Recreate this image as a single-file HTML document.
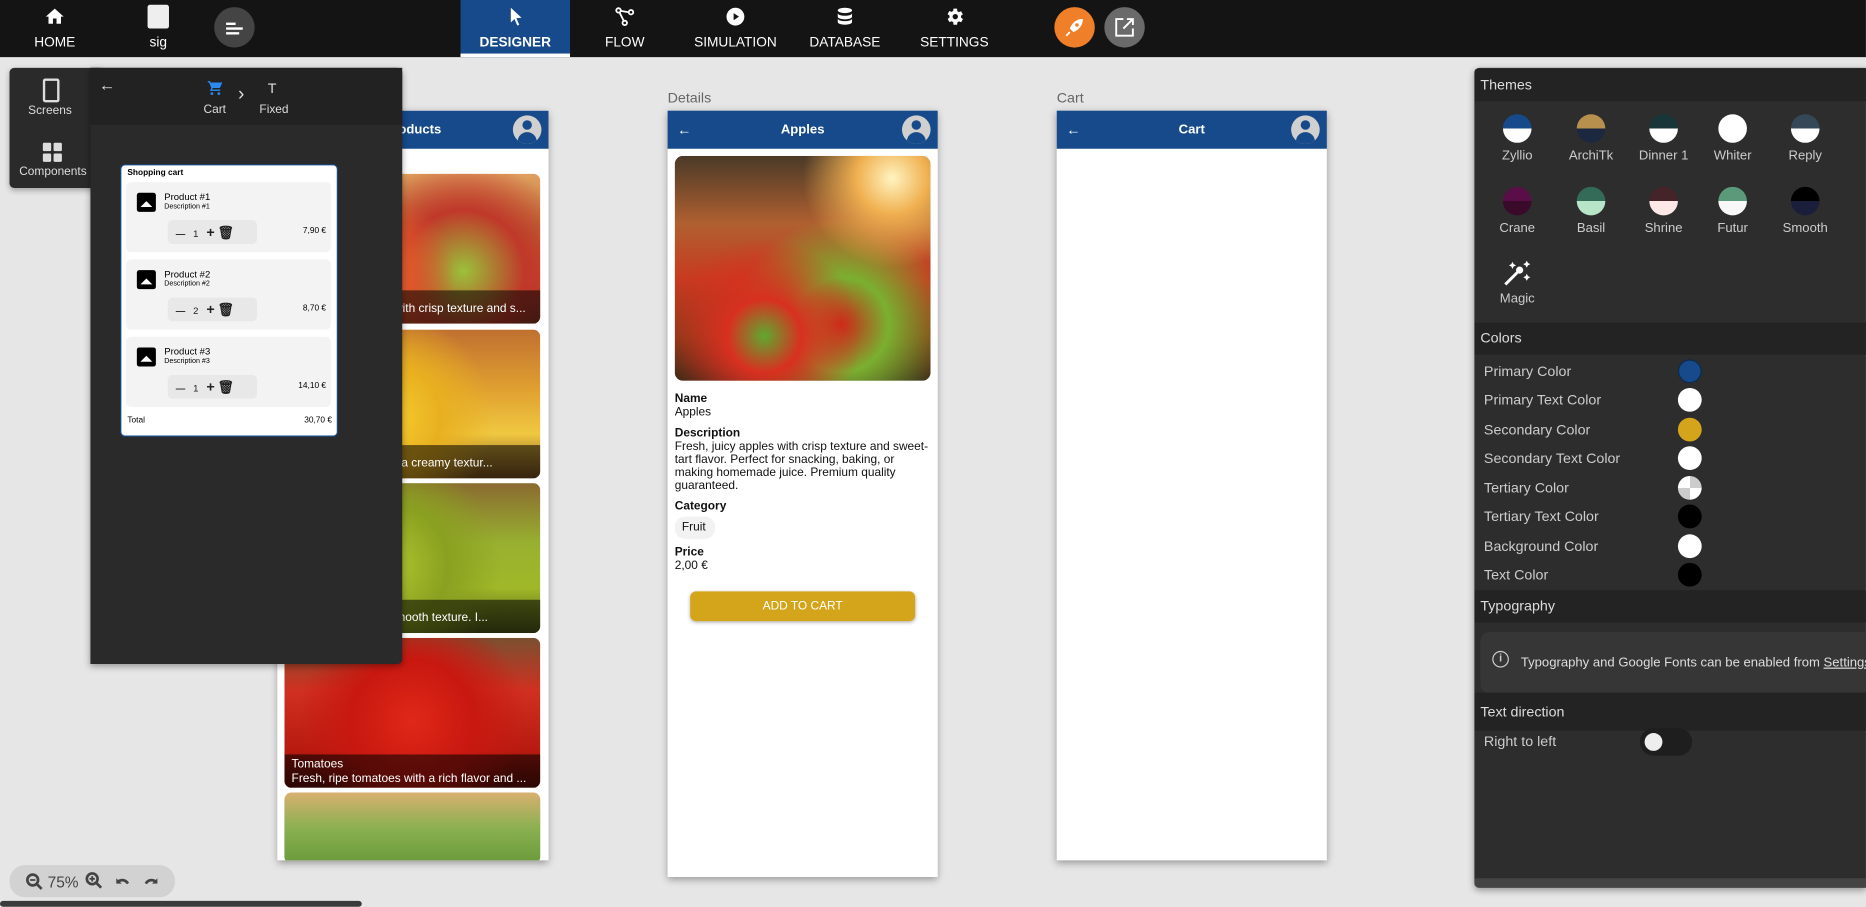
<!DOCTYPE html>
<html><head><meta charset="utf-8">
<style>
*{box-sizing:border-box;margin:0;padding:0}
html,body{width:1866px;height:904px;overflow:hidden;background:#e6e6e6;font-family:"Liberation Sans",sans-serif}
#s{position:absolute;left:0;top:0;width:1568px;height:760px;transform:scale(1.19);transform-origin:0 0;background:#e6e6e6}
.a{position:absolute}
.nav{left:0;top:0;width:1568px;height:48px;background:#141414}
.ni{position:absolute;top:0;height:48px;color:#fff;font-size:11.5px;text-align:center}
.ni span{position:absolute;left:0;right:0;top:30px}
.ni svg{position:absolute;left:50%;top:5px;margin-left:-9px}
.phone{background:#fff;box-shadow:0 2px 6px rgba(0,0,0,.35)}
.ph{position:absolute;left:0;right:0;top:0;height:32px;background:#164a8a;color:#fff;font-size:11px;font-weight:bold;text-align:center;line-height:32px}
.av{position:absolute;right:6px;top:4px;width:24px;height:24px;border-radius:50%;background:#d0d0d0;overflow:hidden}
.av:before{content:"";position:absolute;left:8px;top:4px;width:8px;height:8px;border-radius:50%;background:#164a8a}
.av:after{content:"";position:absolute;left:4px;top:14px;width:16px;height:12px;border-radius:8px 8px 0 0;background:#164a8a}
.img{position:absolute;left:6px;width:215px;border-radius:6px;overflow:hidden}
.cap{position:absolute;left:0;right:0;bottom:0;height:28px;background:rgba(0,0,0,.55);color:#fff;font-size:10px;padding:3px 6px;line-height:12px;white-space:nowrap;overflow:hidden}
.sec{position:absolute;left:0;right:0;height:27px;background:#232323;color:#ddd;font-size:12px;line-height:27px;padding-left:5px}
.th{position:absolute;width:60px;text-align:center;color:#ccc;font-size:11px}
.th i{display:block;width:24px;height:24px;border-radius:50%;margin:0 auto 5px;overflow:hidden}
.cr{position:absolute;left:8px;color:#ccc;font-size:12px}
.dot{position:absolute;left:171px;width:20px;height:20px;border-radius:50%}
.item{position:absolute;left:4px;width:172px;height:59px;background:#f3f3f3;border-radius:4px}
.item .ic{position:absolute;left:9px;top:9px;width:16px;height:16px;background:#000;border-radius:2px}
.item .ic:after{content:"";position:absolute;left:3px;top:7px;border-left:5px solid transparent;border-right:5px solid transparent;border-bottom:5px solid #fff}
.item .t1{position:absolute;left:32px;top:8px;font-size:8px}
.item .t2{position:absolute;left:32px;top:18px;font-size:6px}
.item .q{position:absolute;left:35px;top:32px;width:75px;height:20px;background:#e8e8e8;border-radius:4px;font-size:8px;line-height:20px;color:#222}
.item .p{position:absolute;right:4px;top:38px;font-size:7px}
</style></head><body><div id="s">
<div class="a nav"></div>
<div class="ni" style="left:20px;width:52px"><svg width="18" height="18" viewBox="0 0 24 24"><path fill="#fff" d="M10 20v-6h4v6h5v-8h3L12 3 2 12h3v8z"/></svg><span>HOME</span></div>
<div class="ni" style="left:113px;width:40px"><div class="a" style="left:11px;top:4px;width:18px;height:20px;background:#eee;border-radius:2px"></div><span>sig</span></div>
<div class="a" style="left:180px;top:6px;width:34px;height:34px;border-radius:50%;background:#444"><div class="a" style="left:10px;top:13px;width:8px;height:1.5px;background:#fff"></div><div class="a" style="left:10px;top:17px;width:14px;height:1.5px;background:#fff"></div><div class="a" style="left:10px;top:21px;width:11px;height:1.5px;background:#fff"></div></div>
<div class="ni" style="left:387px;width:92px;background:#164a8a;font-weight:bold;border-bottom:3px solid #fff"><svg width="18" height="18" viewBox="0 0 24 24"><path fill="#fff" d="M7 2l12 11.2-5.8.5 3.3 7.3-2.2 1-3.2-7.4L7 18.5z"/></svg><span>DESIGNER</span></div>
<div class="ni" style="left:497px;width:56px"><svg width="18" height="18" viewBox="0 0 24 24" fill="none" stroke="#fff" stroke-width="2"><circle cx="5" cy="5" r="2.5"/><circle cx="19" cy="7" r="2.5"/><circle cx="12" cy="19" r="2.5"/><path d="M7.5 5.5L16.5 7M6 7l5 10"/></svg><span>FLOW</span></div>
<div class="ni" style="left:577px;width:82px"><svg width="18" height="18" viewBox="0 0 24 24"><circle cx="12" cy="12" r="10" fill="#fff"/><path d="M10 8l6 4-6 4z" fill="#141414"/></svg><span>SIMULATION</span></div>
<div class="ni" style="left:676px;width:68px"><svg width="18" height="18" viewBox="0 0 24 24" fill="#fff"><ellipse cx="12" cy="5" rx="8" ry="3"/><path d="M4 8c0 2 4 3 8 3s8-1 8-3v4c0 2-4 3-8 3s-8-1-8-3zM4 14c0 2 4 3 8 3s8-1 8-3v4c0 2-4 3-8 3s-8-1-8-3z"/></svg><span>DATABASE</span></div>
<div class="ni" style="left:770px;width:64px"><svg width="18" height="18" viewBox="0 0 24 24"><path fill="#fff" d="M19.4 13a7.5 7.5 0 000-2l2.1-1.6-2-3.5-2.5 1a7 7 0 00-1.7-1L15 3h-4l-.4 2.7a7 7 0 00-1.7 1l-2.5-1-2 3.5L6.6 11a7.5 7.5 0 000 2l-2.1 1.6 2 3.5 2.5-1a7 7 0 001.7 1L11 21h4l.4-2.7a7 7 0 001.7-1l2.5 1 2-3.5z"/><circle cx="13" cy="12" r="3" fill="#141414"/></svg><span>SETTINGS</span></div>
<div class="a" style="left:886px;top:6px;width:34px;height:34px;border-radius:50%;background:#f07f2a"><svg width="34" height="34" viewBox="0 0 34 34"><path d="M23 10c-4 0-8 3-10 8l3 3c5-2 8-6 8-11z" fill="#fff"/><circle cx="19" cy="15" r="1.5" fill="#f07f2a"/><path d="M13 21l-3 3" stroke="#fff" stroke-width="1.5"/></svg></div>
<div class="a" style="left:928px;top:6px;width:34px;height:34px;border-radius:50%;background:#6a6a6a"><svg width="34" height="34" viewBox="0 0 34 34" fill="none" stroke="#fff" stroke-width="1.6"><path d="M16 10h-6v14h14v-6M19 10h5v5M24 10l-8 8"/></svg></div>

<!-- products phone -->
<div class="a phone" style="left:233px;top:93px;width:228px;height:630px;overflow:hidden">
<div class="ph">Products<div class="av"></div></div>
<div class="img" style="top:53px;height:126px;background:radial-gradient(circle at 30% 70%,#d8302a 0,#e35a2a 20%,transparent 45%),radial-gradient(circle at 70% 65%,#9bc13a 0,#c0382a 30%,transparent 55%),linear-gradient(#e0a060,#b86a30 40%,#c8402a 70%,#6a3a20)"><div class="cap" style="padding-top:10px">Fresh, juicy apples with crisp texture and s...</div></div>
<div class="img" style="top:184px;height:125px;background:radial-gradient(circle at 40% 60%,#f8d030 0,#e8b020 30%,transparent 60%),linear-gradient(#c07030,#e0a030 40%,#f0c840 70%,#7a5020)"><div class="cap" style="padding-top:10px">Sweet bananas with a creamy textur...</div></div>
<div class="img" style="top:313px;height:126px;background:radial-gradient(circle at 40% 55%,#b0c830 0,#8aa020 35%,transparent 65%),linear-gradient(#8a6a30,#98b030 40%,#a0b828 70%,#505a18)"><div class="cap" style="padding-top:10px">Juicy pears with a smooth texture. I...</div></div>
<div class="img" style="top:443px;height:126px;background:radial-gradient(circle at 50% 55%,#e02818 0,#c81810 40%,transparent 75%),linear-gradient(#7a5030,#d03020 35%,#b81a10 75%,#601008)"><div class="cap">Tomatoes<br>Fresh, ripe tomatoes with a rich flavor and ...</div></div>
<div class="img" style="top:573px;height:60px;background:linear-gradient(#d8b070,#8ab050 50%,#6a9a3a)"></div>
</div>

<!-- Details -->
<div class="a" style="left:561px;top:75px;font-size:12px;color:#666">Details</div>
<div class="a phone" style="left:561px;top:93px;width:227px;height:644px">
<div class="ph">Apples<div class="av"></div><div class="a" style="left:8px;top:0;font-size:12px">←</div></div>
<div class="a" style="left:6px;top:38px;width:215px;height:189px;border-radius:7px;background:radial-gradient(circle at 85% 10%,#fff4c0 0,#f0b050 12%,transparent 30%),radial-gradient(circle at 35% 80%,#60a830 0,#d83020 15%,transparent 40%),radial-gradient(circle at 65% 75%,#c82818 0,#7ab030 20%,transparent 45%),linear-gradient(#4a3a28,#b06030 30%,#c83a20 55%,#8a3a18 80%,#3a2a18)"></div>
<div class="a" style="left:6px;top:237px;font-size:10px;line-height:11px;color:#111;width:215px">
<b>Name</b><br>Apples<div style="height:7px"></div><b>Description</b><br>Fresh, juicy apples with crisp texture and sweet-tart flavor. Perfect for snacking, baking, or making homemade juice. Premium quality guaranteed.<div style="height:6px"></div><b>Category</b><div style="width:34px;background:#f2f2f2;border-radius:9px;padding:4px 6px;margin-top:3px">Fruit</div><div style="height:6px"></div><b>Price</b><br>2,00 €</div>
<div class="a" style="left:19px;top:404px;width:189px;height:25px;background:#d4a51a;border-radius:5px;color:#fff;font-size:10px;text-align:center;line-height:25px;box-shadow:0 1px 3px rgba(0,0,0,.3)">ADD TO CART</div>
</div>

<!-- Cart -->
<div class="a" style="left:888px;top:75px;font-size:12px;color:#666">Cart</div>
<div class="a phone" style="left:888px;top:93px;width:227px;height:630px">
<div class="ph">Cart<div class="av"></div><div class="a" style="left:8px;top:0;font-size:12px">←</div></div>
</div>

<!-- left panels -->
<div class="a" style="left:8px;top:57px;width:80px;height:101px;background:#2a2a2a;border-radius:4px;box-shadow:0 2px 5px rgba(0,0,0,.3)"></div>
<div class="a" style="left:36px;top:66px;width:14px;height:20px;border:2px solid #ddd;border-radius:2px"></div>
<div class="a" style="left:8px;top:88px;width:68px;text-align:center;color:#ddd;font-size:10px">Screens</div>
<div class="a" style="left:36px;top:120px;width:16px;height:16px"><div class="a" style="left:0;top:0;width:7px;height:7px;background:#ddd;border-radius:1px"></div><div class="a" style="left:9px;top:0;width:7px;height:7px;background:#ddd;border-radius:1px"></div><div class="a" style="left:0;top:9px;width:7px;height:7px;background:#ddd;border-radius:1px"></div><div class="a" style="left:9px;top:9px;width:7px;height:7px;background:#ddd;border-radius:1px"></div></div>
<div class="a" style="left:8px;top:139px;width:73px;text-align:center;color:#ddd;font-size:10px">Components</div>
<div class="a" style="left:76px;top:57px;width:262px;height:501px;background:#2a2a2a;border-radius:0 4px 4px 0;box-shadow:0 2px 6px rgba(0,0,0,.35)">
<div class="a" style="left:0;top:0;width:262px;height:48px;background:#222"></div>
<div class="a" style="left:7px;top:6px;color:#ddd;font-size:14px">←</div>
<svg class="a" style="left:97px;top:10px" width="16" height="14" viewBox="0 0 24 24"><path fill="#2a8af0" d="M7 18a2 2 0 100 4 2 2 0 000-4zm10 0a2 2 0 100 4 2 2 0 000-4zM1 2h3.3l.9 2H22l-3.6 8H8.1l-.9 2H19v2H4l2.2-4L3 4H1z"/></svg>
<div class="a" style="left:95px;top:30px;color:#ddd;font-size:10px">Cart</div>
<div class="a" style="left:124px;top:14px;color:#ddd;font-size:16px">›</div>
<div class="a" style="left:149px;top:10px;color:#ddd;font-size:12px">T</div>
<div class="a" style="left:142px;top:30px;color:#ddd;font-size:10px">Fixed</div>
<div class="a" style="left:25px;top:81px;width:183px;height:229px;background:#fff;border:1px solid #164a8a;border-radius:4px">
<div class="a" style="left:5px;top:3px;font-size:7px;font-weight:bold">Shopping cart</div>
<div class="item" style="top:14px"><div class="ic"></div><div class="t1">Product #1</div><div class="t2">Description #1</div><div class="q">&nbsp;&nbsp;&nbsp;<b>—</b>&nbsp;&nbsp;&nbsp;1&nbsp;&nbsp;&nbsp;<b style="font-size:12px">+</b> <b style="font-size:11px">🗑</b></div><div class="p">7,90 €</div></div>
<div class="item" style="top:79px"><div class="ic"></div><div class="t1">Product #2</div><div class="t2">Description #2</div><div class="q">&nbsp;&nbsp;&nbsp;<b>—</b>&nbsp;&nbsp;&nbsp;2&nbsp;&nbsp;&nbsp;<b style="font-size:12px">+</b> <b style="font-size:11px">🗑</b></div><div class="p">8,70 €</div></div>
<div class="item" style="top:144px"><div class="ic"></div><div class="t1">Product #3</div><div class="t2">Description #3</div><div class="q">&nbsp;&nbsp;&nbsp;<b>—</b>&nbsp;&nbsp;&nbsp;1&nbsp;&nbsp;&nbsp;<b style="font-size:12px">+</b> <b style="font-size:11px">🗑</b></div><div class="p">14,10 €</div></div>
<div class="a" style="left:5px;top:211px;font-size:7px">Total</div>
<div class="a" style="right:4px;top:211px;font-size:7px">30,70 €</div>
</div>
</div>

<!-- right panel -->
<div class="a" style="left:1239px;top:57px;width:329px;height:689px;background:#2d2d2d;border-radius:4px 0 0 4px;box-shadow:0 2px 6px rgba(0,0,0,.35);overflow:hidden">
<div class="sec" style="top:1px">Themes</div>
<div class="th" style="left:6px;top:39px"><i style="background:linear-gradient(#164a8a 50%,#fff 50%)"></i>Zyllio</div>
<div class="th" style="left:68px;top:39px"><i style="background:linear-gradient(#b8904e 50%,#1c2840 50%)"></i>ArchiTk</div>
<div class="th" style="left:129px;top:39px"><i style="background:linear-gradient(#18363a 50%,#fff 50%)"></i>Dinner 1</div>
<div class="th" style="left:187px;top:39px"><i style="background:#fff"></i>Whiter</div>
<div class="th" style="left:248px;top:39px"><i style="background:linear-gradient(#344858 50%,#fff 50%)"></i>Reply</div>
<div class="th" style="left:6px;top:100px"><i style="background:linear-gradient(#5a0e48 50%,#3a0a2a 50%)"></i>Crane</div>
<div class="th" style="left:68px;top:100px"><i style="background:linear-gradient(#346a58 50%,#b8e4c8 50%)"></i>Basil</div>
<div class="th" style="left:129px;top:100px"><i style="background:linear-gradient(#442428 50%,#fde8e8 50%)"></i>Shrine</div>
<div class="th" style="left:187px;top:100px"><i style="background:linear-gradient(#5a9a7a 50%,#f8f8f8 50%)"></i>Futur</div>
<div class="th" style="left:248px;top:100px"><i style="background:linear-gradient(#000 50%,#1a1e3a 50%)"></i>Smooth</div>
<div class="th" style="left:6px;top:160px"><svg width="26" height="24" viewBox="0 0 26 24" style="display:block;margin:0 auto 4px"><path d="M3 22L13 12" stroke="#fff" stroke-width="2.5"/><circle cx="15" cy="10" r="3" fill="#fff"/><path d="M9 3l1 2 2 1-2 1-1 2-1-2-2-1 2-1zM21 2l1 2 2 1-2 1-1 2-1-2-2-1 2-1zM21 13l1 2 2 1-2 1-1 2-1-2-2-1 2-1z" fill="#fff"/></svg>Magic</div>
<div class="sec" style="top:214px">Colors</div>
<div class="cr" style="top:248px">Primary Color</div><div class="dot" style="top:245px;background:#164a8a;border:1px solid #0a2a50"></div>
<div class="cr" style="top:272px">Primary Text Color</div><div class="dot" style="top:269px;background:#fff"></div>
<div class="cr" style="top:297px">Secondary Color</div><div class="dot" style="top:294px;background:#d4a51a"></div>
<div class="cr" style="top:321px">Secondary Text Color</div><div class="dot" style="top:318px;background:#fff"></div>
<div class="cr" style="top:346px">Tertiary Color</div><div class="dot" style="top:343px;background:conic-gradient(#ccc 25%,#fff 25% 50%,#ccc 50% 75%,#fff 75%)"></div>
<div class="cr" style="top:370px">Tertiary Text Color</div><div class="dot" style="top:367px;background:#000"></div>
<div class="cr" style="top:395px">Background Color</div><div class="dot" style="top:392px;background:#fff"></div>
<div class="cr" style="top:419px">Text Color</div><div class="dot" style="top:416px;background:#000"></div>
<div class="sec" style="top:439px">Typography</div>
<div class="a" style="left:5px;top:474px;width:340px;height:52px;background:#363636;border-radius:8px;color:#ddd;font-size:11px;line-height:52px;padding-left:34px;white-space:nowrap">Typography and Google Fonts can be enabled from <u>Settings</u> tab</div>
<div class="a" style="left:15px;top:490px;width:14px;height:14px;border:1.5px solid #ccc;border-radius:50%;color:#ccc;font-size:9px;text-align:center;line-height:11px;font-weight:bold">i</div>
<div class="sec" style="top:525px;height:32px;line-height:32px">Text direction</div>
<div class="cr" style="top:559px">Right to left</div>
<div class="a" style="left:139px;top:555px;width:44px;height:23px;background:#1e1e1e;border-radius:12px"><div class="a" style="left:4px;top:4px;width:15px;height:15px;border-radius:50%;background:#eee"></div></div>
<div class="a" style="left:0;top:681px;width:329px;height:8px;background:#444"></div>
</div>

<!-- zoom control -->
<div class="a" style="left:8px;top:727px;width:139px;height:27px;background:#d2d2d2;border-radius:13px;color:#444;font-size:13px">
<svg class="a" style="left:12px;top:5px" width="18" height="18" viewBox="0 0 24 24"><circle cx="10" cy="10" r="6" fill="none" stroke="#444" stroke-width="3"/><path d="M14 14l6 6" stroke="#444" stroke-width="3"/><path d="M7 10h6" stroke="#444" stroke-width="2"/></svg>
<div class="a" style="left:32px;top:7px">75%</div>
<svg class="a" style="left:62px;top:4px" width="18" height="18" viewBox="0 0 24 24"><circle cx="10" cy="10" r="6" fill="none" stroke="#444" stroke-width="3"/><path d="M14 14l6 6" stroke="#444" stroke-width="3"/><path d="M7 10h6M10 7v6" stroke="#444" stroke-width="2"/></svg>
<svg class="a" style="left:86px;top:5px" width="18" height="18" viewBox="0 0 24 24"><path d="M5 8v6h6" fill="#444"/><path d="M6 13c3-4 9-4 12 1" stroke="#444" stroke-width="3" fill="none"/></svg>
<svg class="a" style="left:110px;top:5px" width="18" height="18" viewBox="0 0 24 24"><path d="M19 8v6h-6" fill="#444"/><path d="M18 13c-3-4-9-4-12 1" stroke="#444" stroke-width="3" fill="none"/></svg>
</div>
<div class="a" style="left:0;top:757px;width:304px;height:5px;background:#3a3a3a;border-radius:3px"></div>
</div></body></html>
